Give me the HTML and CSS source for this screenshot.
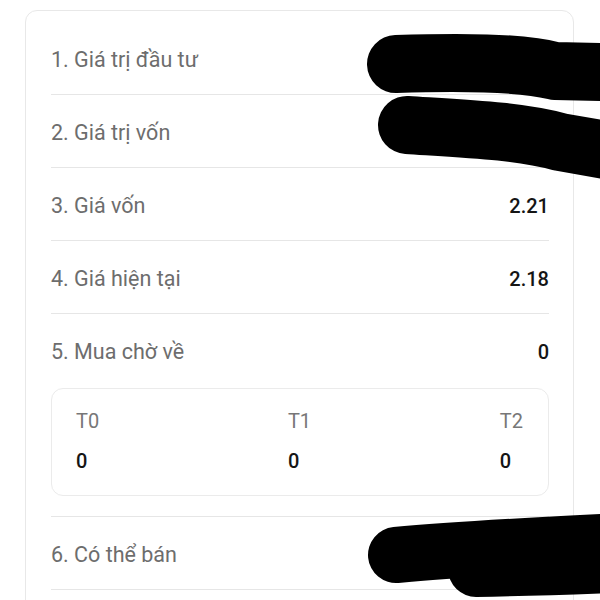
FILE: index.html
```html
<!DOCTYPE html>
<html lang="vi">
<head>
  <meta charset="UTF-8" />
  <meta name="viewport" content="width=device-width, initial-scale=1.0" />
  <title>Tài sản</title>
  <link rel="stylesheet" href="styles.css">
</head>
<body>
  <div class="page">
    <div class="card">
      <div class="row">
        <span class="label">1. Giá trị đầu tư</span>
        <span class="value"></span>
      </div>
      <div class="row">
        <span class="label">2. Giá trị vốn</span>
        <span class="value"></span>
      </div>
      <div class="row">
        <span class="label">3. Giá vốn</span>
        <span class="value">2.21</span>
      </div>
      <div class="row">
        <span class="label">4. Giá hiện tại</span>
        <span class="value">2.18</span>
      </div>
      <div class="row row-block">
        <div class="row-head">
          <span class="label">5. Mua chờ về</span>
          <span class="value">0</span>
        </div>
        <div class="settle-box">
          <div class="settle-col">
            <span class="settle-name">T0</span>
            <span class="settle-val">0</span>
          </div>
          <div class="settle-col">
            <span class="settle-name">T1</span>
            <span class="settle-val">0</span>
          </div>
          <div class="settle-col">
            <span class="settle-name">T2</span>
            <span class="settle-val">0</span>
          </div>
        </div>
      </div>
      <div class="row">
        <span class="label">6. Có thể bán</span>
        <span class="value"></span>
      </div>
    </div>
  </div>

  <!-- vệt che số liệu -->
  <svg class="redact" viewBox="0 0 600 600" width="600" height="600">
    <g fill="none" stroke="#000" stroke-linecap="round" stroke-linejoin="round">
      <path d="M396 64 C460 62 520 62 555 71 L640 73" stroke-width="58" />
      <path d="M407 125 C470 129 520 131 560 142 L640 156" stroke-width="58" />
      <path d="M396 555 C470 548 560 544 640 540" stroke-width="56" />
      <path d="M476 569 C540 568 590 566 640 564" stroke-width="56" />
    </g>
  </svg>
</body>
</html>
```

FILE: styles.css
```css
html {
  overflow: hidden;
}
body {
  margin: 0;
  background: #fff;
  font-family: Roboto, "Noto Sans", Arial, sans-serif;
}
.page {
  padding: 10px 26px 0 25px;
}
.card {
  border: 1px solid #e8e8e8;
  border-radius: 12px;
  padding: 11px 24px 30px 25px;
}
.row {
  display: flex;
  justify-content: space-between;
  align-items: center;
  padding: 24px 0 20px;
  line-height: 28px;
  border-bottom: 1px solid #e6e6e6;
}
.row-block {
  display: block;
}
.row-head {
  display: flex;
  justify-content: space-between;
  align-items: center;
}
.label {
  font-size: 21.5px;
  color: #6d6d6d;
}
.value {
  font-size: 20px;
  font-weight: 500;
  color: #151515;
}
.settle-box {
  margin-top: 22px;
  border: 1px solid #ebebeb;
  border-radius: 12px;
  padding: 18px 25px 20px 24px;
  display: flex;
  justify-content: space-between;
}
.settle-col {
  display: flex;
  flex-direction: column;
  gap: 12px;
}
.settle-name {
  font-size: 20px;
  color: #777;
}
.settle-val {
  font-size: 20px;
  font-weight: 500;
  color: #151515;
}
.redact {
  position: absolute;
  top: 0;
  left: 0;
  pointer-events: none;
}
```
